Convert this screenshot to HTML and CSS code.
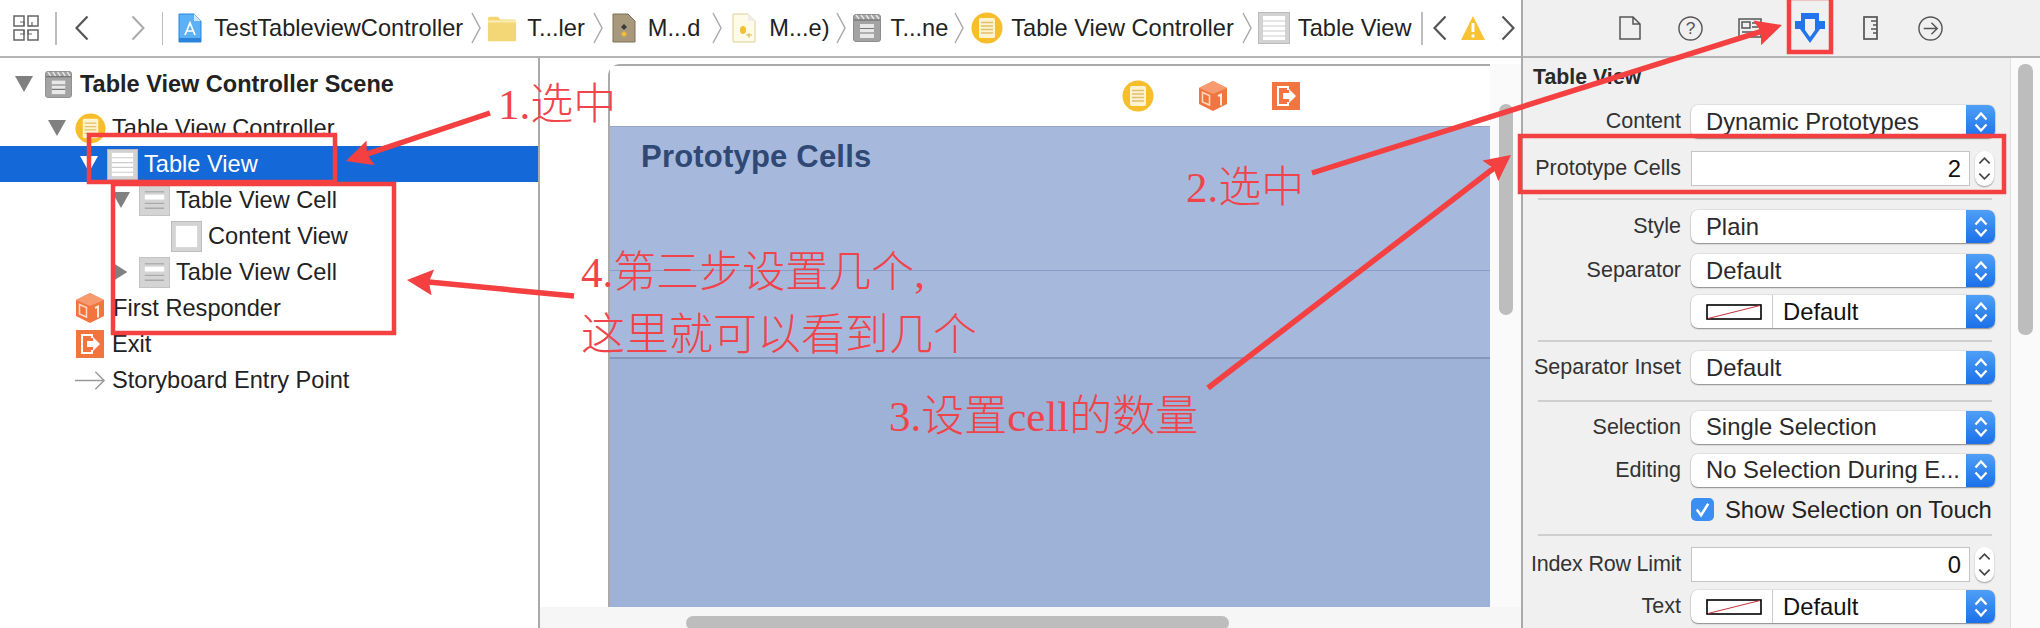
FILE: index.html
```html
<!DOCTYPE html>
<html lang="zh-CN">
<head>
<meta charset="utf-8">
<title>Table View Controller Scene</title>
<link rel="stylesheet" href="styles.css">
</head>
<body>
<svg class="sprite" aria-hidden="true">
  <defs>
    <marker id="head" viewBox="0 0 26 26" markerUnits="userSpaceOnUse" markerWidth="26" markerHeight="26" refX="12" refY="13" orient="auto">
      <path d="M0 0L26 13L0 26L4 13z" fill="#f44040"/>
    </marker>
    <symbol id="i-vc" viewBox="0 0 32 32">
      <circle cx="16" cy="16" r="15.500" fill="#f8bd2a"/>
      <rect x="8" y="6" width="16" height="20" rx="1.500" fill="#fdf3cf"/>
      <path d="M10 10.500h12M10 14h12M10 17.500h12M10 21h12" stroke="#e2c06a" stroke-width="1.300"/>
    </symbol>
    <symbol id="i-table" viewBox="0 0 32 32">
      <rect x=".5" y=".5" width="31" height="31" fill="#d2d2d2" stroke="#bbb"/>
      <rect x="5" y="4" width="22" height="24" fill="#fff"/>
      <path d="M5 9h22M5 14h22M5 19h22M5 24h22" stroke="#ccc" stroke-width="1.200"/>
    </symbol>
    <symbol id="i-cell" viewBox="0 0 32 32">
      <rect x=".5" y=".5" width="31" height="31" fill="#d4d4d4" stroke="#c2c2c2"/>
      <path d="M6 7h20" stroke="#aaa" stroke-width="1.400"/>
      <rect x="6" y="10" width="20" height="5" fill="#fff"/>
      <path d="M6 19h20M6 24h20" stroke="#aaa" stroke-width="1.400"/>
    </symbol>
    <symbol id="i-view" viewBox="0 0 32 32">
      <rect x=".5" y=".5" width="31" height="31" fill="#d4d4d4" stroke="#bbb"/>
      <rect x="5" y="5" width="22" height="22" fill="#fff"/>
    </symbol>
    <symbol id="i-cube" viewBox="0 0 28 30">
      <path d="M14 0L28 7V23L14 30L0 23V7z" fill="#f2743f"/>
      <path d="M14 0L28 7L14 13L0 7z" fill="#f79a6f"/>
      <path d="M3.500 11.500l7 3v9.500l-7-3z" fill="none" stroke="#ffd9c6" stroke-width="1.500"/>
      <path d="M19 15l3-1.500v11" fill="none" stroke="#ffe9de" stroke-width="2"/>
    </symbol>
    <symbol id="i-exit" viewBox="0 0 28 28">
      <rect width="28" height="28" fill="#f2743f"/>
      <path d="M16 8V5H6v18h10v-3" fill="none" stroke="#fff" stroke-width="2"/>
      <path d="M11 11h6V7l7 7-7 7v-4h-6z" fill="#fff"/>
    </symbol>
    <symbol id="i-scene" viewBox="0 0 28 28">
      <rect x=".5" y=".5" width="27" height="27" rx="2.500" fill="#a3a3a3" stroke="#8c8c8c"/>
      <path d="M1 6h26" stroke="#666" stroke-width="1"/>
      <path d="M3 1l3 4M8 1l3 4M13 1l3 4M18 1l3 4M23 1l3 4" stroke="#e5e5e5" stroke-width="1.500"/>
      <rect x="7" y="10" width="14" height="14" fill="#e8e8e8"/>
      <path d="M7 14.500h14M7 19h14" stroke="#777" stroke-width="1.200"/>
    </symbol>
    <symbol id="i-updown" viewBox="0 0 18 26">
      <path d="M3.500 10.500L9 4.500l5.500 6M3.500 15.500L9 21.500l5.500-6" fill="none" stroke="#fff" stroke-width="2.200"/>
    </symbol>
    <symbol id="i-step" viewBox="0 0 18 34">
      <path d="M4 12L9 7l5 5M4 22l5 5 5-5" fill="none" stroke="#444" stroke-width="1.600"/>
    </symbol>
    <symbol id="i-sep" viewBox="0 0 10 32">
      <path d="M1 1L9 16L1 31" fill="none" stroke="#aaa" stroke-width="1.500"/>
    </symbol>
  </defs>
</svg>

<div class="app">
  <div class="editor">
    <header class="toolbar">
      <svg class="grid-icon" viewBox="0 0 26 26"><path d="M1 1h10v10H1zM15 1h10v10H15zM1 15h10v10H1zM15 15h10v10H15z" fill="none" stroke="#666" stroke-width="1.500"/><path d="M7 7h4v4M15 11h4V7M7 19h4v-4M19 19h-4v-4" fill="none" stroke="#666" stroke-width="1.200"/></svg>
      <span class="divider first"></span>
      <svg class="chev back" viewBox="0 0 14 26"><path d="M12.500 1.500L1.500 13l11 11.500" fill="none" stroke="#555" stroke-width="2.200"/></svg>
      <svg class="chev fwd" viewBox="0 0 14 26"><path d="M1.500 1.500L12.500 13 1.500 24.500" fill="none" stroke="#aaa" stroke-width="2"/></svg>
      <span class="divider"></span>
      <nav class="crumbs">
        <svg class="ci c-app" viewBox="0 0 24 30"><path d="M1 1h15l7 7v21H1z" fill="#5db0f3" stroke="#2b83dc"/><path d="M16 1v7h7" fill="#cfe6fb"/><path d="M7 22L12 10l5 12M8.500 18h7" fill="none" stroke="#fff" stroke-width="1.700"/><path d="M1 25h22v4H1z" fill="#2b83dc"/></svg>
        <span class="ct t1">TestTableviewController</span>
        <svg class="sep"><use href="#i-sep"/></svg>
        <svg class="ci c-folder" viewBox="0 0 30 32"><path d="M0 6q0-2 2-2h9l2 3h15q2 0 2 2v21H0z" fill="#f3d776"/><path d="M0 9h30" stroke="#fbeeb8" stroke-width="2"/></svg>
        <span class="ct t2">T...ler</span>
        <svg class="sep"><use href="#i-sep"/></svg>
        <svg class="ci c-board" viewBox="0 0 24 30"><path d="M1 1h15l7 7v21H1z" fill="#a8997c" stroke="#7c6f58"/><path d="M9 14l3-3 3 3-3 3z" fill="#3a3a3a"/><path d="M9 21l3-3 3 3-3 3z" fill="#f3c12e"/></svg>
        <span class="ct t3">M...d</span>
        <svg class="sep"><use href="#i-sep"/></svg>
        <svg class="ci c-strings" viewBox="0 0 24 30"><path d="M1 1h15l7 7v21H1z" fill="#fffbe9" stroke="#e2cf93"/><path d="M16 1v7h7z" fill="#eee"/><ellipse cx="11" cy="17" rx="3" ry="4" fill="#f3c12e"/><path d="M14 22h6M17 20v5" stroke="#d3b55a" stroke-width="1"/></svg>
        <span class="ct t4">M...e)</span>
        <svg class="sep"><use href="#i-sep"/></svg>
        <svg class="ci c-scene"><use href="#i-scene"/></svg>
        <span class="ct t5">T...ne</span>
        <svg class="sep"><use href="#i-sep"/></svg>
        <svg class="ci c-vc"><use href="#i-vc"/></svg>
        <span class="ct t6">Table View Controller</span>
        <svg class="sep"><use href="#i-sep"/></svg>
        <svg class="ci c-table"><use href="#i-table"/></svg>
        <span class="ct t7">Table View</span>
      </nav>
      <span class="divider right"></span>
      <svg class="chev back2" viewBox="0 0 14 26"><path d="M12.500 1.500L1.500 13l11 11.500" fill="none" stroke="#555" stroke-width="2.200"/></svg>
      <svg class="warn" viewBox="0 0 24 24"><path d="M12 0L24 24H0z" fill="#f9c232"/><path d="M12 7v9" stroke="#fff" stroke-width="3"/><circle cx="12" cy="20" r="1.700" fill="#fff"/></svg>
      <svg class="chev fwd2" viewBox="0 0 14 26"><path d="M1.500 1.500L12.500 13 1.500 24.500" fill="none" stroke="#555" stroke-width="2.200"/></svg>
    </header>

    <div class="workspace">
      <aside class="navigator">
        <div class="row scene-row d0"><span class="tri down"></span><svg class="ic ic-scene"><use href="#i-scene"/></svg><span class="lbl">Table View Controller Scene</span></div>
        <div class="row d1"><span class="tri down"></span><svg class="ic"><use href="#i-vc"/></svg><span class="lbl">Table View Controller</span></div>
        <div class="row d2 selected"><span class="tri down white"></span><svg class="ic"><use href="#i-table"/></svg><span class="lbl">Table View</span></div>
        <div class="row d3"><span class="tri down"></span><svg class="ic"><use href="#i-cell"/></svg><span class="lbl">Table View Cell</span></div>
        <div class="row d4"><span class="tri none"></span><svg class="ic"><use href="#i-view"/></svg><span class="lbl">Content View</span></div>
        <div class="row d3"><span class="tri side"></span><svg class="ic"><use href="#i-cell"/></svg><span class="lbl">Table View Cell</span></div>
        <div class="row d1"><span class="tri none"></span><svg class="ic ic-cube"><use href="#i-cube"/></svg><span class="lbl">First Responder</span></div>
        <div class="row d1"><span class="tri none"></span><svg class="ic ic-exit"><use href="#i-exit"/></svg><span class="lbl">Exit</span></div>
        <div class="row d1"><span class="tri none"></span><svg class="ic" viewBox="0 0 32 20"><path d="M0 10h30M21 1l9 9-9 9" fill="none" stroke="#999" stroke-width="1.500"/></svg><span class="lbl">Storyboard Entry Point</span></div>
      </aside>

      <main class="canvas">
        <div class="canvas-body">
          <section class="scene">
            <div class="dock">
              <svg class="dock-vc"><use href="#i-vc"/></svg>
              <svg class="dock-cube"><use href="#i-cube"/></svg>
              <svg class="dock-exit"><use href="#i-exit"/></svg>
            </div>
            <div class="table">
              <div class="proto">
                <div class="proto-title">Prototype Cells</div>
                <div class="proto-cell"></div>
              </div>
              <div class="table-empty"></div>
            </div>
          </section>
          <div class="vscroll"><span class="vthumb"></span></div>
        </div>
        <div class="hscroll"><span class="hthumb"></span></div>
      </main>
    </div>
  </div>

  <div class="inspector">
    <div class="tabs">
      <svg class="tab t-doc" viewBox="0 0 22 24"><path d="M1 1h13l7 7v15H1zM14 1v7h7" fill="none" stroke="#555" stroke-width="1.500"/></svg>
      <svg class="tab t-help" viewBox="0 0 26 26"><circle cx="13" cy="13" r="12" fill="none" stroke="#555" stroke-width="1.500"/><text x="13" y="18.500" class="help-q">?</text></svg>
      <svg class="tab t-id" viewBox="0 0 24 24"><rect x="1" y="3" width="22" height="18" fill="none" stroke="#555" stroke-width="1.500"/><rect x="4" y="6" width="8" height="6" fill="none" stroke="#555" stroke-width="1.500"/><path d="M14 7h6M14 11h6M4 16h16" stroke="#555" stroke-width="1.500"/></svg>
      <svg class="tab t-attr" viewBox="0 0 30 30"><path d="M6 0h18v8h6v8h-5L15 30 5 16H0V8h6z" fill="#2273ee"/><path d="M10 6h10v11l-5 7-5-7z" fill="#f0f0f0"/></svg>
      <svg class="tab t-ruler" viewBox="0 0 15 24"><rect x="1" y="1" width="13" height="22" fill="none" stroke="#555" stroke-width="1.700"/><path d="M8 5h6M10 9h4M8 13h6M10 17h4" stroke="#555" stroke-width="1.500"/></svg>
      <svg class="tab t-conn" viewBox="0 0 26 26"><circle cx="13" cy="13" r="12" fill="none" stroke="#555" stroke-width="1.500"/><path d="M6 13h13M14 7l6 6-6 6" fill="none" stroke="#555" stroke-width="1.500"/></svg>
    </div>
    <div class="insp-body">
      <div class="panel">
        <h2 class="panel-title">Table View</h2>

        <div class="field m-first"><label>Content</label><div class="popup"><span class="val">Dynamic Prototypes</span><span class="blue"><svg><use href="#i-updown"/></svg></span></div></div>
        <div class="field stepper-field m-13"><label>Prototype Cells</label><div class="num"><span>2</span></div><span class="stepper"><svg><use href="#i-step"/></svg></span></div>
        <hr class="rule top">
        <div class="field"><label>Style</label><div class="popup"><span class="val">Plain</span><span class="blue"><svg><use href="#i-updown"/></svg></span></div></div>
        <div class="field m-11"><label>Separator</label><div class="popup"><span class="val">Default</span><span class="blue"><svg><use href="#i-updown"/></svg></span></div></div>
        <div class="field m-8"><label></label><div class="popup"><span class="swatch-wrap"><svg class="swatch" viewBox="0 0 56 16"><rect x="1" y="1" width="54" height="14" fill="#fff" stroke="#000" stroke-width="1.600"/><path d="M2 14.500L54 1.500" stroke="#c4303c"/></svg></span><span class="val dark">Default</span><span class="blue"><svg><use href="#i-updown"/></svg></span></div></div>
        <hr class="rule">
        <div class="field"><label>Separator Inset</label><div class="popup"><span class="val">Default</span><span class="blue"><svg><use href="#i-updown"/></svg></span></div></div>
        <hr class="rule wide">
        <div class="field"><label>Selection</label><div class="popup"><span class="val">Single Selection</span><span class="blue"><svg><use href="#i-updown"/></svg></span></div></div>
        <div class="field m-10"><label>Editing</label><div class="popup"><span class="val">No Selection During E...</span><span class="blue"><svg><use href="#i-updown"/></svg></span></div></div>
        <div class="field check-field m-11"><label></label><div class="check"><span class="check-box"><svg viewBox="0 0 24 24"><path d="M6 12l4.500 6L18 6" fill="none" stroke="#fff" stroke-width="2.600"/></svg></span><span class="check-text">Show Selection on Touch</span></div></div>
        <hr class="rule low">
        <div class="field stepper-field"><label class="tight">Index Row Limit</label><div class="num"><span>0</span></div><span class="stepper"><svg><use href="#i-step"/></svg></span></div>
        <div class="field m-8"><label>Text</label><div class="popup"><span class="swatch-wrap"><svg class="swatch" viewBox="0 0 56 16"><rect x="1" y="1" width="54" height="14" fill="#fff" stroke="#000" stroke-width="1.600"/><path d="M2 14.500L54 1.500" stroke="#c4303c"/></svg></span><span class="val dark">Default</span><span class="blue"><svg><use href="#i-updown"/></svg></span></div></div>
      </div>
      <div class="insp-scroll"><span class="insp-thumb"></span></div>
    </div>
  </div>
</div>

<svg class="marks" viewBox="0 0 2040 628" aria-hidden="true">
  <rect class="mark-box" x="89" y="135" width="246" height="47"/>
  <rect class="mark-box" x="113" y="184" width="281" height="149"/>
  <rect class="mark-box" x="1789" y="-2" width="42" height="54"/>
  <rect class="mark-box" x="1520" y="136" width="484" height="56"/>
  <line class="arrow" x1="490" y1="113" x2="359.300" y2="156.600"/>
  <line class="arrow" x1="1312" y1="173" x2="1768.600" y2="29.200"/>
  <line class="arrow" x1="1208" y1="388" x2="1499.900" y2="163.500"/>
  <line class="arrow" x1="574" y1="296" x2="420.900" y2="281.300"/>
</svg>
<div class="note n1">1.选中</div>
<div class="note n2">2.选中</div>
<div class="note n3">3.设置cell的数量</div>
<div class="note n4">4.第三步设置几个,</div>
<div class="note n5">这里就可以看到几个</div>
</body>
</html>
```
FILE: styles.css
```css
* { box-sizing: border-box; }
html, body { margin: 0; padding: 0; width: 2040px; height: 628px; overflow: hidden; background: #fff; }
body { position: relative; font-family: "Liberation Sans", Arial, sans-serif; color: #222; }
.sprite { position: absolute; width: 0; height: 0; }
.app { display: flex; width: 2040px; height: 628px; }

/* left part */
.editor { width: 1521px; display: flex; flex-direction: column; }
.toolbar { height: 58px; flex: none; display: flex; align-items: center; padding-left: 13px; border-bottom: 2px solid #b4b4b4; background: #fff; }
.grid-icon { width: 26px; height: 26px; margin-right: 16px; }
.divider { width: 1.500px; height: 33px; background: #bdbdbd; flex: none; }
.chev { width: 14px; height: 26px; flex: none; }
.back { margin-left: 18px; }
.fwd { margin-left: 42px; margin-right: 17px; }
.crumbs { display: flex; align-items: center; margin-left: 15px; width: 1243px; flex: none; font-size: 23.600px; white-space: nowrap; }
.ci { flex: none; height: 30px; width: 24px; }
.ct { flex: none; }
.sep { width: 10px; height: 32px; flex: none; margin: 0 7px 0 8px; }
.t1 { margin-left: 12px; }
.c-folder { width: 30px; margin-left: -1px; }
.t2 { margin-left: 10px; }
.c-board { margin-left: 2px; }
.t3 { margin-left: 12px; margin-right: 4px; }
.c-strings { margin-left: 3px; }
.t4 { margin-left: 13px; margin-right: -2px; }
.c-scene { width: 28px; height: 28px; }
.t5 { margin-left: 10px; margin-right: -2px; }
.c-vc { width: 32px; height: 32px; }
.t6 { margin-left: 8px; }
.c-table { width: 32px; height: 32px; margin-left: -1px; }
.t7 { margin-left: 8px; }
.back2 { margin-left: 10px; }
.warn { width: 24px; height: 24px; margin-left: 14px; }
.fwd2 { margin-left: 16px; }

.workspace { flex: 1; min-height: 0; display: flex; }
.navigator { width: 540px; flex: none; padding-top: 8px; border-right: 2px solid #aaa; background: #fff; }
.row { height: 36px; display: flex; align-items: center; font-size: 23.600px; color: #222; white-space: nowrap; }
.tri { width: 18px; height: 16px; margin-right: 9px; flex: none; }
.down { background: #808080; clip-path: polygon(0 0, 100% 0, 50% 100%); }
.side { background: #808080; clip-path: polygon(15% 0, 85% 50%, 15% 100%); }
.white { background: #fff; }
.ic { width: 31px; height: 31px; margin-right: 6px; flex: none; }
.ic-cube { width: 28px; height: 30px; margin: 0 9px 0 1px; }
.ic-exit { width: 28px; height: 28px; margin: 0 8px 0 1px; }
.d0 { padding-left: 15px; }
.d1 { padding-left: 48px; }
.d2 { padding-left: 80px; }
.d3 { padding-left: 112px; }
.d4 { padding-left: 144px; }
.scene-row { margin-bottom: 8px; font-weight: bold; font-size: 23.500px; }
.scene-row .tri { margin-right: 12px; }
.scene-row .ic-scene { width: 27px; height: 27px; margin-right: 8px; }
.selected { background: #1468d8; color: #fff; }

.canvas { flex: 1; min-width: 0; display: flex; flex-direction: column; }
.canvas-body { flex: 1; min-height: 0; display: flex; padding: 6px 0 0 68px; background: #fff; }
.scene { flex: 1; min-width: 0; display: flex; flex-direction: column; border: 2px solid #aaa; border-width: 2px 0 0 2px; border-top-left-radius: 12px; }
.dock { height: 61px; flex: none; display: flex; align-items: center; justify-content: flex-end; gap: 45px; padding: 0 190px 0 0; background: #fff; border-bottom: 1px solid #9aa6bd; }
.dock-vc { width: 32px; height: 32px; }
.dock-cube { width: 28px; height: 30px; }
.dock-exit { width: 28px; height: 28px; }
.table { flex: 1; display: flex; flex-direction: column; background: #9eb1d6; }
.proto { height: 232px; flex: none; display: flex; flex-direction: column; background: #a6b9dd; border-bottom: 2px solid #8596bb; }
.proto-title { height: 144px; flex: none; padding: 12px 0 0 31px; font-size: 31px; letter-spacing: .2px; font-weight: bold; color: #2f4874; border-bottom: 1px solid #8a9cc5; }
.proto-cell { flex: 1; }
.table-empty { flex: 1; }
.vscroll { width: 31px; flex: none; background: #fafafa; padding: 40px 8px 0 9px; }
.vthumb { display: block; width: 14px; height: 211px; border-radius: 7px; background: #bdbdbd; }
.hscroll { height: 21px; flex: none; background: #f6f6f6; padding: 9px 0 0 146px; }
.hthumb { display: block; width: 543px; height: 14px; border-radius: 7px; background: #bdbdbd; }

/* inspector */
.inspector { flex: 1; min-width: 0; display: flex; flex-direction: column; background: #f0f0f0; border-left: 2px solid #aaa; }
.tabs { height: 58px; flex: none; display: flex; align-items: center; border-bottom: 2px solid #b4b4b4; padding-left: 96px; }
.tab { flex: none; height: 24px; }
.t-doc { width: 22px; }
.t-help { width: 25px; margin-left: 37px; height: 25px; }
.t-id { width: 24px; margin-left: 35px; }
.t-attr { width: 30px; height: 30px; margin-left: 33px; }
.t-ruler { width: 15px; margin-left: 38px; }
.t-conn { width: 25px; height: 25px; margin-left: 40px; }
.help-q { font-size: 18px; fill: #555; text-anchor: middle; font-family: "Liberation Sans", sans-serif; }
.insp-body { flex: 1; min-height: 0; display: flex; }
.panel { width: 488px; flex: none; padding-top: 6px; border-right: 1px solid #e0e0e0; }
.panel-title { margin: 0 0 0 10px; height: 26px; font-size: 21.300px; line-height: 26px; font-weight: bold; color: #2a2a2a; }
.field { display: flex; align-items: center; height: 33px; font-size: 23.800px; }
.field label { width: 158px; margin-right: 10px; flex: none; text-align: right; font-size: 21.500px; color: #333; white-space: nowrap; }
.field label.tight { letter-spacing: -.2px; }
.m-first { margin-top: 15px; }
.m-13 { margin-top: 13px; }
.m-11 { margin-top: 11px; }
.m-10 { margin-top: 10px; }
.m-8 { margin-top: 8px; }
.popup { width: 304px; height: 33px; display: flex; align-items: center; background: #fff; border-radius: 7px; box-shadow: 0 1px 1.500px rgba(0,0,0,.4), 0 0 0 .5px rgba(0,0,0,.1); overflow: hidden; white-space: nowrap; }
.val { flex: 1; padding-left: 15px; color: #2a2a2a; }
.val.dark { padding-left: 10px; color: #111; }
.blue { width: 29px; height: 33px; flex: none; display: flex; align-items: center; justify-content: center; background: linear-gradient(#4f9ff7, #1b70e8); }
.blue svg { width: 18px; height: 26px; }
.swatch-wrap { width: 82px; height: 33px; flex: none; display: flex; align-items: center; padding-left: 15px; border-right: 1.500px solid #ccc; }
.swatch { width: 56px; height: 16px; }
.stepper-field { height: 35px; }
.num { width: 279px; height: 35px; display: flex; align-items: center; justify-content: flex-end; padding-right: 8px; background: #fff; border: 1px solid #c4c4c4; color: #111; }
.stepper { width: 19px; height: 35px; margin-left: 5px; border-radius: 9px; background: #fff; box-shadow: 0 1px 1.500px rgba(0,0,0,.35); flex: none; }
.stepper svg { width: 19px; height: 35px; display: block; }
.rule { height: 2px; margin: 12px 18px 9px 15px; padding: 0; border: 0; background: #cfcfcf; }
.rule.top { margin-bottom: 10px; }
.rule.wide { margin-top: 15.500px; }
.rule.low { margin-bottom: 11.500px; }
.check-field { height: 24px; }
.check { display: flex; align-items: center; white-space: nowrap; }
.check-box { width: 23px; height: 23px; border-radius: 5px; background: #3c8ff2; margin-right: 11px; display: block; }
.check-box svg { display: block; width: 23px; height: 23px; }
.check-text { color: #222; }
.insp-scroll { flex: 1; background: #fafafa; padding: 6px 6px 0 7px; }
.insp-thumb { display: block; width: 15px; height: 271px; border-radius: 7px; background: #bdbdbd; }

/* annotation layer over the screenshot */
.marks { position: absolute; left: 0; top: 0; width: 2040px; height: 628px; pointer-events: none; }
.mark-box { fill: none; stroke: #f44040; stroke-width: 4.500px; }
.arrow { stroke: #f44040; stroke-width: 5.500px; marker-end: url(#head); }
.note { position: absolute; color: #f0444a; font-family: "Liberation Serif", "Noto Sans CJK SC", serif; font-weight: 300; font-size: 43px; line-height: 50px; white-space: nowrap; }
.n1 { left: 498px; top: 80px; }
.n2 { left: 1186px; top: 163px; }
.n3 { left: 889px; top: 392px; }
.n4 { left: 581px; top: 248px; }
.n5 { left: 581px; top: 311px; font-size: 44px; }
```
